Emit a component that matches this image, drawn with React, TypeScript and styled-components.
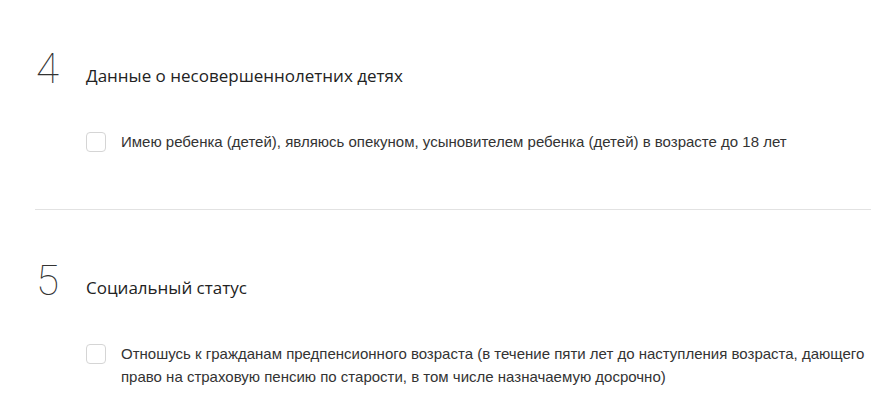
import React from "react";
import styled, { createGlobalStyle } from "styled-components";

const Global = createGlobalStyle`
  html, body { margin: 0; padding: 0; background: #fff; }
  body { font-family: "Liberation Sans", Arial, sans-serif; color: #222; }
`;

const Page = styled.div`
  padding: 0 0 0 35px;
  overflow: hidden;
`;

const Section = styled.section<{ $top: number; $bottom: number; $divider?: boolean }>`
  padding-top: ${(p) => p.$top}px;
  padding-bottom: ${(p) => p.$bottom}px;
  border-bottom: ${(p) => (p.$divider ? "1px solid #e2e2e2" : "none")};
`;

const Header = styled.div`
  display: flex;
  align-items: center;
  height: 44px;
`;

const Num = styled.div`
  width: 50px;
  font-family: Roboto, "Open Sans", sans-serif;
  font-weight: 100;
  font-size: 42px;
  line-height: 44px;
  color: #333;
  padding-left: 1px;
  margin-top: -2px;
`;

const Title = styled.h3`
  margin: 0;
  font-family: "Open Sans", "Noto Sans", sans-serif;
  font-weight: 400;
  font-size: 17px;
  color: #222;
  padding-top: 10px;
`;

const Option = styled.label<{ $mt: number }>`
  display: flex;
  align-items: flex-start;
  gap: 15px;
  margin-top: ${(p) => p.$mt}px;
  padding-left: 51px;
`;

const Box = styled.span`
  flex: none;
  width: 18px;
  height: 18px;
  border: 1px solid #d5d5d5;
  border-radius: 4px;
  background: #fff;
  margin-top: 0px;
`;

const OptText = styled.span`
  font-family: "Liberation Sans", Arial, sans-serif;
  font-size: 15px;
  line-height: 23px;
  color: #333;
  margin-top: -2px;
`;

export default function App() {
  return (
    <Page>
      <Global />
      <Section $top={48} $bottom={56} $divider>
        <Header>
          <Num>4</Num>
          <Title>Данные о несовершеннолетних детях</Title>
        </Header>
        <Option $mt={40}>
          <Box />
          <OptText>
            Имею ребенка (детей), являюсь опекуном, усыновителем ребенка (детей) в возрасте до 18 лет
          </OptText>
        </Option>
      </Section>
      <Section $top={50} $bottom={20}>
        <Header>
          <Num>5</Num>
          <Title>Социальный статус</Title>
        </Header>
        <Option $mt={40}>
          <Box />
          <OptText>
            Отношусь к гражданам предпенсионного возраста (в течение пяти лет до наступления возраста, дающего
            право на страховую пенсию по старости, в том числе назначаемую досрочно)
          </OptText>
        </Option>
      </Section>
    </Page>
  );
}
